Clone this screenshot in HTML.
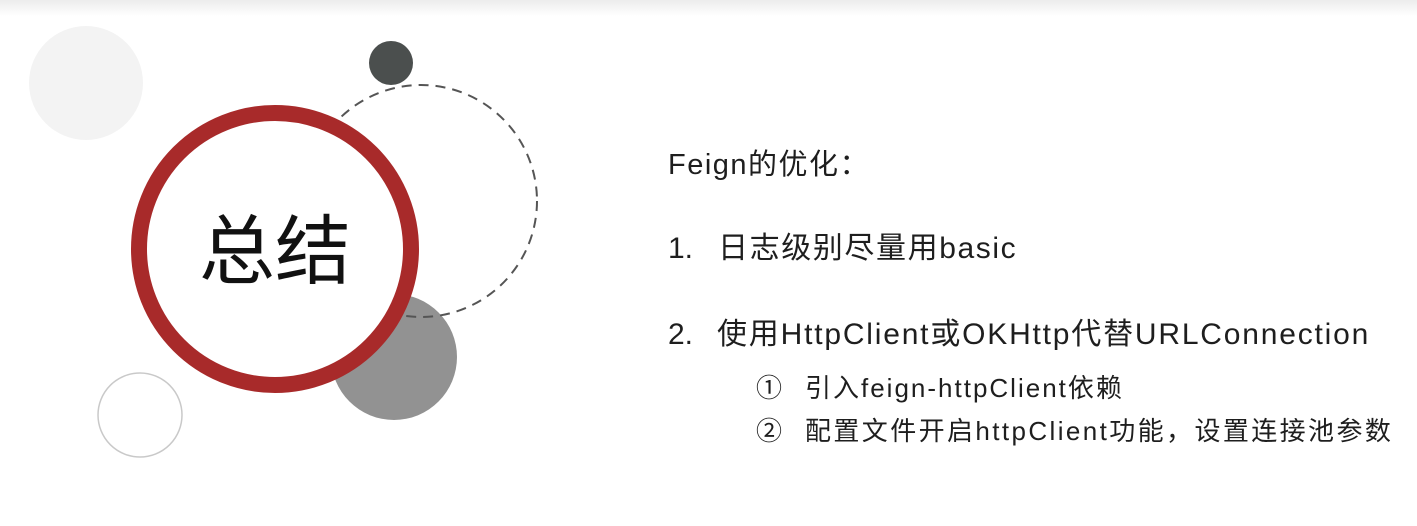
<!DOCTYPE html>
<html><head><meta charset="utf-8"><style>
html,body{margin:0;padding:0;width:1417px;height:526px;overflow:hidden;background:#fff;}
body{position:relative;font-family:"Liberation Sans","Noto Sans CJK SC",sans-serif;color:#1e1e1e;}
.top{position:absolute;left:0;top:0;width:1417px;height:16px;background:linear-gradient(#ececec,#fff);}
.t{position:absolute;white-space:nowrap;}
.m{font-size:30px;line-height:40px;}
.s{font-size:26px;line-height:34px;}
</style></head><body>
<div class="top"></div>
<svg width="1417" height="526" style="position:absolute;left:0;top:0">
<circle cx="86" cy="83" r="57" fill="#f3f3f3"/>
<circle cx="391" cy="63" r="22" fill="#4b4f4e"/>
<circle cx="394" cy="357" r="63" fill="#929292"/>
<circle cx="421" cy="201" r="116" fill="none" stroke="#555" stroke-width="2" stroke-dasharray="10,7"/>
<circle cx="140" cy="415" r="42" fill="none" stroke="#c9c9c9" stroke-width="1.5"/>
<circle cx="275" cy="249" r="136" fill="#fff" stroke="#a82a2a" stroke-width="16"/>
<text x="275" y="278" text-anchor="middle" font-family="Noto Sans CJK SC,sans-serif" font-size="76" fill="#111">总结</text>
</svg>
<div class="t" style="left:668px;top:147px;font-size:29px;line-height:36px;letter-spacing:1.5px;">Feign的优化：</div>
<div class="t m" style="left:668px;top:229px;">1.</div>
<div class="t m" style="left:718px;top:229px;letter-spacing:1.6px;">日志级别尽量用basic</div>
<div class="t m" style="left:668px;top:315px;">2.</div>
<div class="t m" style="left:717px;top:315px;letter-spacing:1.8px;">使用HttpClient或OKHttp代替URLConnection</div>
<div class="t s" style="left:756px;top:371px;">①</div>
<div class="t s" style="left:805px;top:371px;letter-spacing:2px;">引入feign-httpClient依赖</div>
<div class="t s" style="left:756px;top:414px;">②</div>
<div class="t s" style="left:805px;top:414px;letter-spacing:2.4px;">配置文件开启httpClient功能，设置连接池参数</div>
</body></html>
